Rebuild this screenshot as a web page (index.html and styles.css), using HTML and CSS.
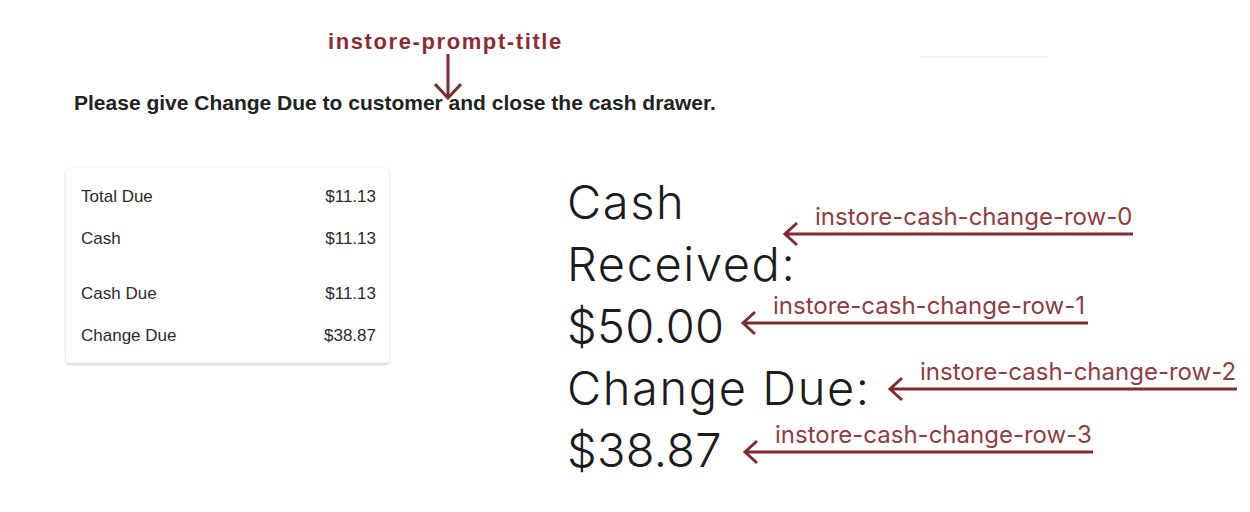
FILE: index.html
```html
<!DOCTYPE html>
<html lang="en">
<head>
    <meta charset="UTF-8">
    <meta name="viewport" content="width=device-width, initial-scale=1.0">
    <title>Cash Change</title>
    <link rel="stylesheet" href="styles.css">
</head>
<body>

    <div class="page">

        <!-- Prompt title -->
        <h1 class="prompt-title">Please give Change Due to customer and close the cash drawer.</h1>

        <div class="content">
            <!-- Summary card -->
            <div class="summary-card">
                <div class="summary-group">
                    <div class="summary-row"><span>Total Due</span><span>$11.13</span></div>
                    <div class="summary-row"><span>Cash</span><span>$11.13</span></div>
                </div>
                <div class="summary-group">
                    <div class="summary-row"><span>Cash Due</span><span>$11.13</span></div>
                    <div class="summary-row"><span>Change Due</span><span>$38.87</span></div>
                </div>
            </div>

            <!-- Cash change rows -->
            <div class="cash-change">
                <div class="cash-change-row">Cash Received:</div>
                <div class="cash-change-row amount">$50.00</div>
                <div class="cash-change-row">Change Due:</div>
                <div class="cash-change-row amount">$38.87</div>
            </div>
        </div>

        <!-- Annotations -->
        <div class="top-rule"></div>

        <div class="title-note">
            <span class="title-note-label">instore-prompt-title</span>
            <svg class="down-arrow" width="28" height="46" viewBox="0 0 28 46">
                <path d="M14 0 V44 M1 30 L14 44 L27 30" fill="none" stroke="#7f2b31" stroke-width="3"/>
            </svg>
        </div>

        <div class="anno anno-0">
            <span class="anno-label">instore-cash-change-row-0</span>
            <svg width="350" height="50" viewBox="0 0 350 50">
                <path d="M2 32 H350 M14 21 L2 32 L14 43" fill="none" stroke="#7f2b31" stroke-width="3"/>
            </svg>
        </div>
        <div class="anno anno-1">
            <span class="anno-label">instore-cash-change-row-1</span>
            <svg width="347" height="50" viewBox="0 0 347 50">
                <path d="M2 32 H347 M14 21 L2 32 L14 43" fill="none" stroke="#7f2b31" stroke-width="3"/>
            </svg>
        </div>
        <div class="anno anno-2">
            <span class="anno-label">instore-cash-change-row-2</span>
            <svg width="349" height="50" viewBox="0 0 349 50">
                <path d="M2 32 H349 M14 21 L2 32 L14 43" fill="none" stroke="#7f2b31" stroke-width="3"/>
            </svg>
        </div>
        <div class="anno anno-3">
            <span class="anno-label">instore-cash-change-row-3</span>
            <svg width="350" height="50" viewBox="0 0 350 50">
                <path d="M2 32 H350 M14 21 L2 32 L14 43" fill="none" stroke="#7f2b31" stroke-width="3"/>
            </svg>
        </div>

    </div>

</body>
</html>
```

FILE: styles.css
```css
body {
    font-family: "Liberation Sans", Arial, sans-serif;
    background-color: #fff;
    color: #222;
    margin: 0;
    padding: 0;
}

.page {
    position: relative;
    height: 512px;
    padding: 93px 0 0 66px;
    box-sizing: border-box;
}

.prompt-title {
    margin: 0 0 0 8px;
    font-size: 21px;
    line-height: 20px;
    font-weight: bold;
    color: #222;
}

.content {
    display: flex;
    align-items: flex-start;
    margin-top: 55px;
}

.summary-card {
    width: 323px;
    box-sizing: border-box;
    padding: 19px 13px 17px 15px;
    background-color: #fff;
    border-radius: 4px;
    box-shadow: 0 2px 3px rgba(0, 0, 0, 0.16), 0 0 2px rgba(0, 0, 0, 0.08);
    color: #2b2b2b;
    font-size: 17px;
}

.summary-group {
    display: flex;
    flex-direction: column;
    gap: 22px;
}

.summary-group + .summary-group {
    margin-top: 35px;
}

.summary-row {
    display: flex;
    justify-content: space-between;
    line-height: 20px;
}

.cash-change {
    width: 330px;
    margin-left: 178px;
    margin-top: 3px;
    font-family: Inter, "Liberation Sans", sans-serif;
    font-weight: 300;
    font-size: 47px;
    line-height: 62px;
    letter-spacing: 1.6px;
    color: #1c1c1c;
}

.cash-change-row.amount {
    letter-spacing: 0.3px;
}

/* annotation overlays */
.top-rule {
    position: absolute;
    left: 920px;
    top: 56px;
    width: 128px;
    height: 2px;
    background-color: #f3f3f3;
}

.title-note {
    position: absolute;
    left: 328px;
    top: 29px;
}

.title-note-label {
    display: block;
    font-size: 22px;
    line-height: 26px;
    font-weight: bold;
    letter-spacing: 1.6px;
    color: #8a2d33;
}

.down-arrow {
    display: block;
    margin: -1px 0 0 106px;
}

.anno {
    position: absolute;
    height: 40px;
}

.anno svg {
    position: absolute;
    left: 0;
    top: 0;
    overflow: visible;
}

.anno-label {
    display: block;
    padding-left: 32px;
    font-family: Inter, "Liberation Sans", sans-serif;
    font-size: 24px;
    line-height: 30px;
    color: #8e3d44;
}

.anno-0 { left: 783px; top: 202px; width: 350px; }
.anno-1 { left: 741px; top: 291px; width: 347px; }
.anno-2 { left: 888px; top: 357px; width: 349px; }
.anno-3 { left: 743px; top: 420px; width: 350px; }
```
